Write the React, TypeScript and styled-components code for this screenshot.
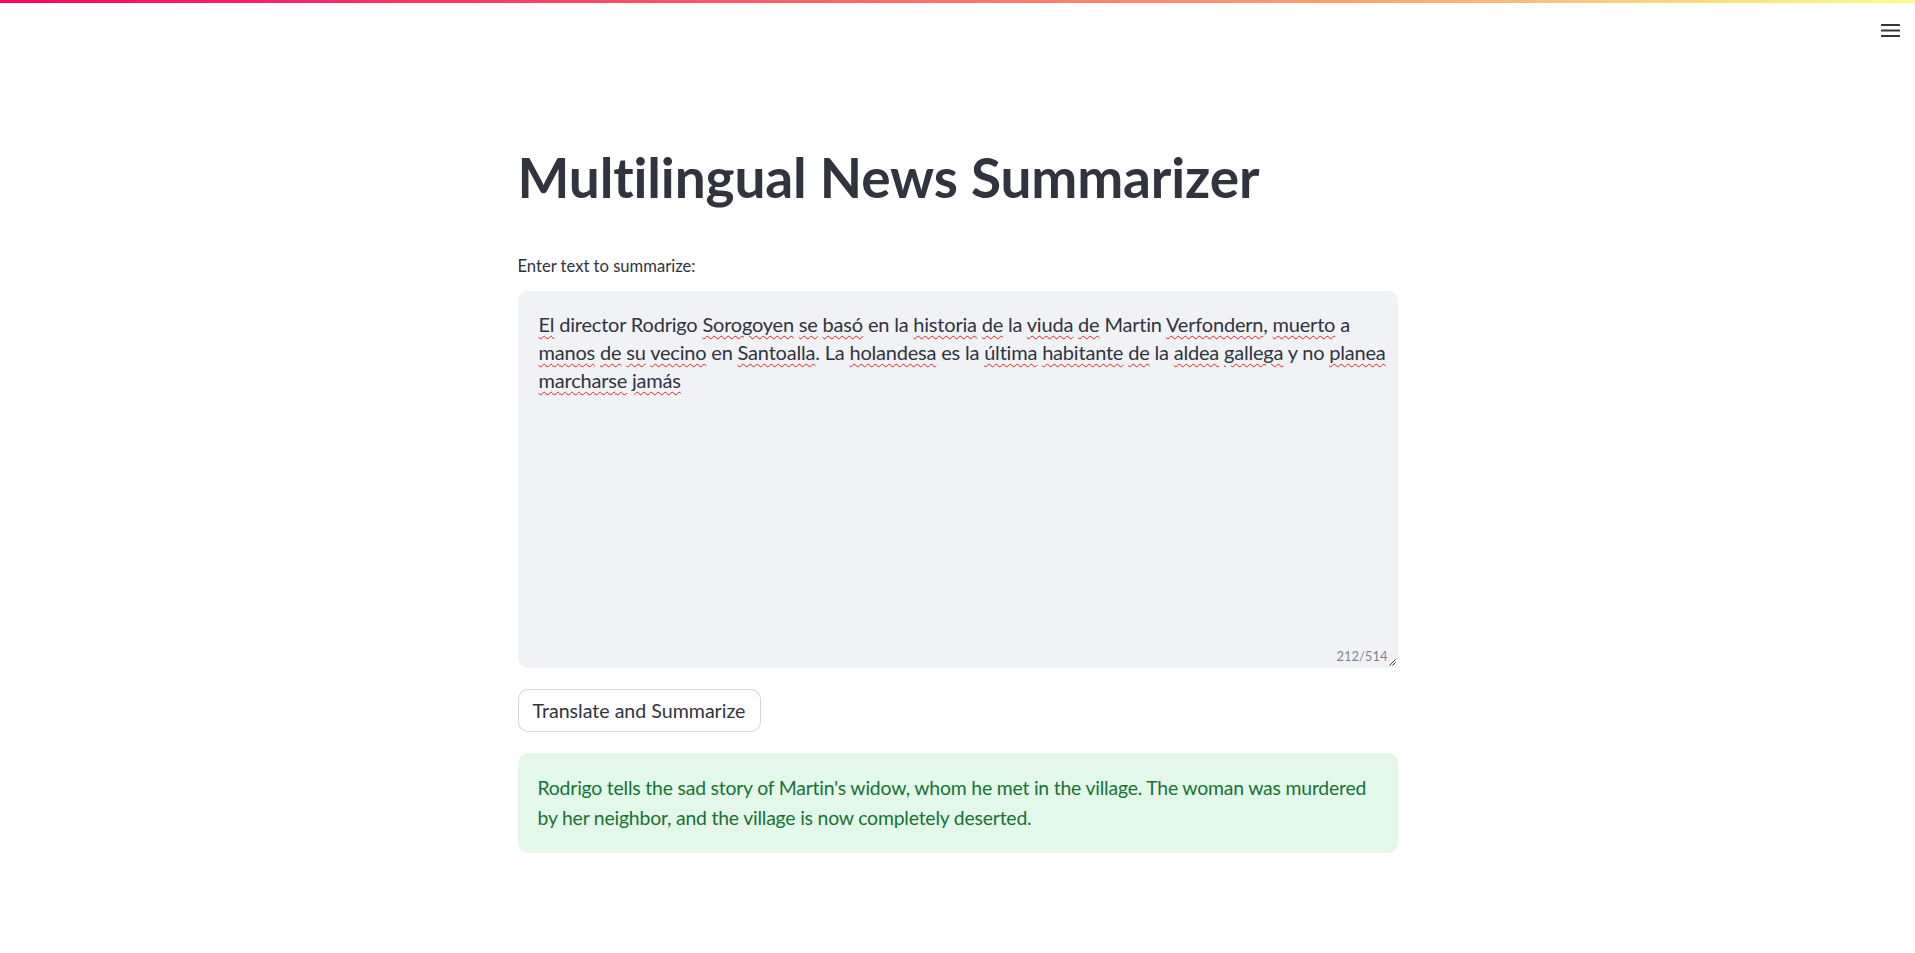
import styled, { createGlobalStyle } from 'styled-components';

const GlobalStyle = createGlobalStyle`
  html, body {
    margin: 0;
    padding: 0;
    background: #ffffff;
  }
  body {
    font-family: Lato, "Open Sans", sans-serif;
    color: #31333f;
  }
  * {
    box-sizing: border-box;
  }
`;

type Word = { text: string; typo?: boolean };

const sourceLines: Word[][] = [
  [
    { text: 'El', typo: true },
    { text: 'director' },
    { text: 'Rodrigo' },
    { text: 'Sorogoyen', typo: true },
    { text: 'se', typo: true },
    { text: 'basó', typo: true },
    { text: 'en' },
    { text: 'la' },
    { text: 'historia', typo: true },
    { text: 'de', typo: true },
    { text: 'la' },
    { text: 'viuda', typo: true },
    { text: 'de', typo: true },
    { text: 'Martin' },
    { text: 'Verfondern,', typo: true },
    { text: 'muerto', typo: true },
    { text: 'a' },
  ],
  [
    { text: 'manos', typo: true },
    { text: 'de', typo: true },
    { text: 'su', typo: true },
    { text: 'vecino', typo: true },
    { text: 'en' },
    { text: 'Santoalla.', typo: true },
    { text: 'La' },
    { text: 'holandesa', typo: true },
    { text: 'es' },
    { text: 'la' },
    { text: 'última', typo: true },
    { text: 'habitante', typo: true },
    { text: 'de', typo: true },
    { text: 'la' },
    { text: 'aldea', typo: true },
    { text: 'gallega', typo: true },
    { text: 'y' },
    { text: 'no' },
    { text: 'planea', typo: true },
  ],
  [
    { text: 'marcharse', typo: true },
    { text: 'jamás', typo: true },
  ],
];

function renderWord(w: Word, i: number, last: boolean) {
  // trailing punctuation isn't underlined by the spell checker
  const m = w.text.match(/^(.*?)([.,]?)$/);
  const core = m ? m[1] : w.text;
  const punct = m ? m[2] : '';
  return (
    <span key={i}>
      {w.typo ? <Typo>{core}</Typo> : core}
      {punct}
      {last ? '' : ' '}
    </span>
  );
}

export default function App() {
  return (
    <>
      <GlobalStyle />
      <Page>
        <Decoration />
        <Header>
          <MenuButton aria-label="menu">
            <svg width="20" height="14" viewBox="0 0 20 14">
              <rect x="0" y="0" width="19" height="2" rx="0.5" fill="#31333f" />
              <rect x="0" y="5.5" width="19" height="2" rx="0.5" fill="#31333f" />
              <rect x="0" y="11" width="19" height="2" rx="0.5" fill="#31333f" />
            </svg>
          </MenuButton>
        </Header>
        <Main>
          <Title>Multilingual News Summarizer</Title>
          <Field>
            <Label>Enter text to summarize:</Label>
            <TextBox role="textbox" aria-multiline="true">
              {sourceLines.map((line, li) => (
                <TextLine key={li}>
                  {line.map((w, i) => renderWord(w, i, i === line.length - 1))}
                </TextLine>
              ))}
              <Counter>212/514</Counter>
              <Grip width="7" height="7" viewBox="0 0 7 7">
                <path d="M6.5 0.5 L0.5 6.5 M6.5 3.5 L3.5 6.5" stroke="#31333f" strokeWidth="1" />
              </Grip>
            </TextBox>
          </Field>
          <Button>Translate and Summarize</Button>
          <SuccessBox>
            <SuccessLine>
              Rodrigo tells the sad story of Martin's widow, whom he met in the village. The woman was murdered
            </SuccessLine>
            <SuccessLine>by her neighbor, and the village is now completely deserted.</SuccessLine>
          </SuccessBox>
        </Main>
      </Page>
    </>
  );
}

const Page = styled.div`
  min-height: 953px;
  background: #ffffff;
`;

const Decoration = styled.div`
  height: 3px;
  background: linear-gradient(90deg, #ff0062 0%, #ff5c6a 40%, #ffa070 70%, #f8ff88 100%);
`;

const Header = styled.header`
  height: 55px;
  display: flex;
  justify-content: flex-end;
  align-items: flex-start;
  padding: 21px 14px 0 0;
`;

const MenuButton = styled.div`
  width: 20px;
  height: 14px;
  display: flex;
  cursor: pointer;
`;

const Main = styled.main`
  width: 880px;
  margin: 0 auto;
  display: flex;
  flex-direction: column;
  padding-top: 86px;
`;

const Title = styled.h1`
  margin: 0;
  font-family: Lato, sans-serif;
  font-weight: 700;
  font-size: 55px;
  line-height: 66px;
  letter-spacing: -0.15px;
  color: #31333f;
`;

const Field = styled.div`
  display: flex;
  flex-direction: column;
  margin-top: 45px;
`;

const Label = styled.label`
  font-size: 16.6px;
  line-height: 22px;
  color: #31333f;
  margin-bottom: 14px;
`;

const TextBox = styled.div`
  position: relative;
  height: 377px;
  background: #f0f2f6;
  border: 1px solid #f0f2f6;
  border-radius: 10px;
  padding: 18px 20px;
  font-size: 20px;
  line-height: 28px;
  color: #31333f;
  letter-spacing: -0.2px;
`;

const TextLine = styled.div`
  white-space: nowrap;
`;

const Typo = styled.span`
  text-decoration: underline wavy #e8201c;
  text-decoration-thickness: 1px;
  text-underline-offset: 3px;
`;

const Counter = styled.span`
  position: absolute;
  right: 9px;
  bottom: 2px;
  font-size: 13px;
  line-height: 18px;
  letter-spacing: 0;
  color: rgba(49, 51, 63, 0.6);
`;

const Grip = styled.svg`
  position: absolute;
  right: 1px;
  bottom: 1px;
`;

const Button = styled.button`
  align-self: flex-start;
  margin-top: 21px;
  height: 43px;
  width: 243px;
  padding: 0;
  white-space: nowrap;
  background: #ffffff;
  border: 1px solid rgba(49, 51, 63, 0.2);
  border-radius: 10px;
  font-family: Lato, sans-serif;
  font-size: 19.6px;
  letter-spacing: 0;
  color: #31333f;
  cursor: pointer;
`;

const SuccessBox = styled.div`
  margin-top: 21px;
  padding: 20px 20px;
  background: rgba(33, 195, 84, 0.12);
  border-radius: 10px;
  color: #177233;
  font-size: 19.4px;
  line-height: 30px;
  letter-spacing: -0.2px;
`;

const SuccessLine = styled.div`
  white-space: nowrap;
`;
